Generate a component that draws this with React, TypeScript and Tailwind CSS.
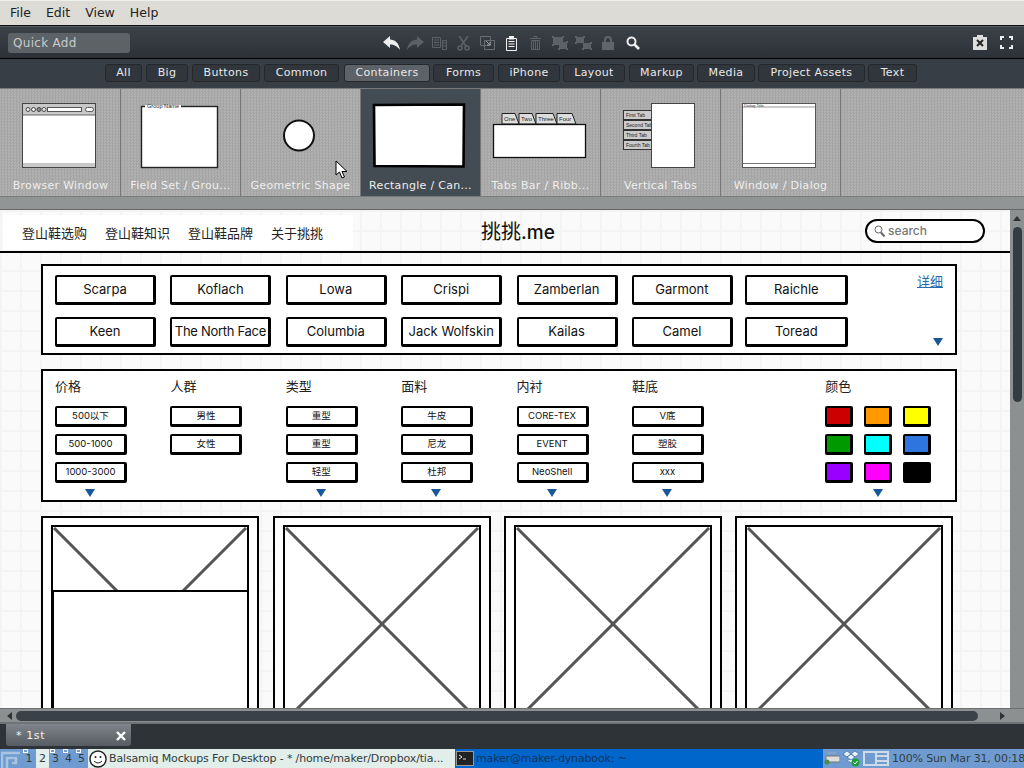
import React from "react";

const tabs = [
  { label: "All", w: "w-[37px]", ml: "ml-[105px]" },
  { label: "Big", w: "w-[42px]", ml: "ml-[4px]" },
  { label: "Buttons", w: "w-[68px]", ml: "ml-[4px]" },
  { label: "Common", w: "w-[75px]", ml: "ml-[4px]" },
  { label: "Containers", w: "w-[86px]", ml: "ml-[5px]", active: true },
  { label: "Forms", w: "w-[61px]", ml: "ml-[3px]" },
  { label: "iPhone", w: "w-[62px]", ml: "ml-[4px]" },
  { label: "Layout", w: "w-[62px]", ml: "ml-[3px]" },
  { label: "Markup", w: "w-[65px]", ml: "ml-[4px]" },
  { label: "Media", w: "w-[58px]", ml: "ml-[3px]" },
  { label: "Project Assets", w: "w-[107px]", ml: "ml-[3px]" },
  { label: "Text", w: "w-[49px]", ml: "ml-[3px]" },
];

const brands = [
  "Scarpa", "Koflach", "Lowa", "Crispi", "Zamberlan", "Garmont", "Raichle",
  "Keen", "The North Face", "Columbia", "Jack Wolfskin", "Kailas", "Camel", "Toread",
];

const filters = [
  { title: "价格", items: ["500以下", "500-1000", "1000-3000"], more: true },
  { title: "人群", items: ["男性", "女性"], more: false },
  { title: "类型", items: ["重型", "重型", "轻型"], more: true },
  { title: "面料", items: ["牛皮", "尼龙", "杜邦"], more: true },
  { title: "内衬", items: ["CORE-TEX", "EVENT", "NeoShell"], more: true },
  { title: "鞋底", items: ["V底", "塑胶", "xxx"], more: true },
];

const swatches = [
  "bg-[#cc0000]", "bg-[#ff9900]", "bg-[#ffff00]",
  "bg-[#009900]", "bg-[#00ffff]", "bg-[#2e75e0]",
  "bg-[#9900ff]", "bg-[#ff00ff]", "bg-[#000000]",
];

function Triangle() {
  return (
    <svg width="10" height="8" viewBox="0 0 10 8" className="block">
      <path d="M0 0H10L5 8Z" fill="#1a5796" />
    </svg>
  );
}

function ToolIcons() {
  return (
    <div className="flex items-center absolute left-[383px] top-[6px] h-[20px]">
      <svg width="17" height="14" viewBox="0 0 17 14" fill="#eeeeee"><path d="M0 6L7 0V3.5C12 3.5 16 7 17 14 14 10 11 8.5 7 8.5V12Z" /></svg>
      <svg width="17" height="14" viewBox="0 0 17 14" fill="#595f64" className="ml-[7px]"><path d="M17 6L10 0V3.5C5 3.5 1 7 0 14 3 10 6 8.5 10 8.5V12Z" /></svg>
      <svg width="15" height="14" viewBox="0 0 15 14" fill="none" stroke="#5b6166" className="ml-[8px]"><path d="M.5 1.5H8.5V11.5H.5ZM2 4H7M2 6.5H7M2 9H7M10.5 4.5H14.5V13.5H10.5ZM10.5 7H14.5M10.5 10H14.5" /></svg>
      <svg width="13" height="15" viewBox="0 0 13 15" fill="none" stroke="#5b6166" strokeWidth="1.6" className="ml-[10px]"><path d="M2 0L9 10M11 0L4 10" /><circle cx="3" cy="12" r="2" /><circle cx="10" cy="12" r="2" /></svg>
      <svg width="15" height="14" viewBox="0 0 15 14" fill="none" stroke="#666c70" className="ml-[10px]"><path d="M.5 .5H10.5V9.5H.5ZM4.5 4.5H14.5V13.5H4.5Z" /><path d="M6 5L10 9M10 6V9H7" stroke="#9a9ea1" /></svg>
      <svg width="11" height="15" viewBox="0 0 11 15" fill="none" stroke="#f2f2f2" className="ml-[11px]"><path d="M.5 2.5H10.5V14.5H.5ZM2.5 5.5H8.5M2.5 8H8.5M2.5 10.5H8.5" /><rect x="3" y="0" width="5" height="3.5" fill="#f2f2f2" stroke="none" /></svg>
      <svg width="11" height="14" viewBox="0 0 11 14" fill="none" stroke="#5b6166" className="ml-[13px]"><path d="M0 2.5H11M4 2.5V.5H7V2.5M1.5 4.5H9.5V13.5H1.5ZM3.5 5V13M5.5 5V13M7.5 5V13" /></svg>
      <svg width="16" height="14" viewBox="0 0 16 14" fill="#5b6166" className="ml-[11px]"><path d="M1 1H11V9H1ZM7 6H15V13H7Z" /><path d="M0 0H2V2H0ZM10 0H12V2H10ZM0 8H2V10H0ZM14 12H16V14H14ZM6 12H8V14H6ZM14 5H16V7H14Z" /></svg>
      <svg width="17" height="14" viewBox="0 0 17 14" fill="#5b6166" className="ml-[7px]"><path d="M1 1H9V7H1ZM8 7H16V13H8Z" /><path d="M0 0H2V2H0ZM8 0H10V2H8ZM0 6H2V8H0ZM15 12H17V14H15ZM7 12H9V14H7ZM15 6H17V8H15Z" /></svg>
      <svg width="12" height="14" viewBox="0 0 12 14" className="ml-[10px]"><path d="M3 6V4A3 3 0 0 1 9 4V6" fill="none" stroke="#5f6569" strokeWidth="2" /><rect x="0" y="6" width="12" height="8" fill="#5f6569" /></svg>
      <svg width="14" height="14" viewBox="0 0 14 14" fill="none" stroke="#eeeeee" className="ml-[12px]"><circle cx="5.5" cy="5.5" r="4" strokeWidth="2" /><path d="M8.5 8.5L13 13" strokeWidth="2.6" /></svg>
    </div>
  );
}

function Thumb({ kind }: { kind: string }) {
  if (kind === "browser") {
    return (
      <svg width="120" height="92" viewBox="0 0 120 92" className="-mt-px">
        <rect x="21.5" y="15.5" width="73" height="64" fill="#fff" stroke="#444" />
        <rect x="22" y="16" width="72" height="11" fill="#c8c8c8" />
        <path d="M22 27H94" stroke="#666" />
        <circle cx="27" cy="21.5" r="2" fill="#eee" stroke="#444" />
        <circle cx="32.5" cy="21.5" r="2" fill="#eee" stroke="#444" />
        <circle cx="38" cy="21.5" r="2" fill="#888" stroke="#444" />
        <circle cx="43" cy="21.5" r="2" fill="#eee" stroke="#444" />
        <rect x="46.5" y="19.5" width="34" height="4" fill="#fff" stroke="#555" />
        <rect x="84.5" y="19.5" width="8" height="4" rx="2" fill="#fff" stroke="#555" />
        <rect x="22" y="75" width="72" height="4" fill="#c8c8c8" />
      </svg>
    );
  }
  if (kind === "fieldset") {
    return (
      <svg width="120" height="92" viewBox="0 0 120 92" className="-mt-px">
        <rect x="20.5" y="18.5" width="76" height="61" fill="#fff" stroke="#222" strokeWidth="1.4" />
        <rect x="24" y="17" width="36" height="3" fill="#ffffff" />
        <text x="26" y="20" fontSize="5.6" fill="#222" fontFamily="Liberation Sans, sans-serif">Group Name</text>
      </svg>
    );
  }
  if (kind === "shape") {
    return (
      <svg width="120" height="92" viewBox="0 0 120 92" className="-mt-px">
        <circle cx="58" cy="47.5" r="15" fill="#fff" stroke="#111" strokeWidth="2" />
      </svg>
    );
  }
  if (kind === "rect") {
    return (
      <svg width="120" height="92" viewBox="0 0 120 92" className="-mt-px">
        <path d="M13 17L103 16.5 102.5 78.5 13.5 78Z" fill="#fff" stroke="#000" strokeWidth="2.6" />
      </svg>
    );
  }
  if (kind === "tabs") {
    return (
      <svg width="120" height="92" viewBox="0 0 120 92" className="-mt-px">
        {[
          ["One", 21, 38],
          ["Two", 38, 55],
          ["Three", 55, 76],
          ["Four", 76, 95],
        ].map(([t, a, b]) => (
          <g key={t as string}>
            <path d={`M${a} 36V25.5H${(b as number) - 4}L${b} 36Z`} fill="#ddd" stroke="#222" />
            <text x={(a as number) + 2} y="33" fontSize="6" fill="#222" fontFamily="Liberation Sans, sans-serif">{t}</text>
          </g>
        ))}
        <rect x="12.5" y="36.5" width="92" height="33" fill="#fff" stroke="#111" strokeWidth="1.3" />
      </svg>
    );
  }
  if (kind === "vtabs") {
    return (
      <svg width="120" height="92" viewBox="0 0 120 92" className="-mt-px">
        {["First Tab", "Second Tab", "Third Tab", "Fourth Tab"].map((t, i) => (
          <g key={t}>
            <rect x="22.5" y={22.5 + i * 10} width="28" height="9" fill="#ccc" stroke="#333" />
            <text x="25" y={29 + i * 10} fontSize="5" fill="#222" fontFamily="Liberation Sans, sans-serif">{t}</text>
          </g>
        ))}
        <rect x="50.5" y="15.5" width="43" height="64" fill="#fff" stroke="#444" />
      </svg>
    );
  }
  return (
    <svg width="120" height="92" viewBox="0 0 120 92" className="-mt-px">
      <rect x="21.5" y="15.5" width="73" height="64" fill="#fff" stroke="#555" />
      <path d="M22 19H94" stroke="#999" strokeWidth="1" />
      <text x="23" y="19" fontSize="4" fill="#444" fontFamily="Liberation Sans, sans-serif">Dialog Title</text>
      <path d="M22 75.5H94" stroke="#777" />
    </svg>
  );
}

const library = [
  { kind: "browser", label: "Browser Window" },
  { kind: "fieldset", label: "Field Set / Grou..." },
  { kind: "shape", label: "Geometric Shape" },
  { kind: "rect", label: "Rectangle / Can...", active: true },
  { kind: "tabs", label: "Tabs Bar / Ribb..." },
  { kind: "vtabs", label: "Vertical Tabs" },
  { kind: "window", label: "Window / Dialog" },
];

function PlaceholderCard({ overlay }: { overlay?: boolean }) {
  return (
    <div className={`w-[218px] h-[300px] shrink-0 border-2 border-black bg-white pl-[8px] pt-[7px] ${overlay ? "mr-px" : ""}`}>
      <div className="relative w-[198px] h-[198px] border-2 border-black bg-white">
        <svg width="194" height="194" viewBox="0 0 194 194" className="block">
          <path d="M1 1L193 193M193 1L1 193" stroke="#555555" strokeWidth="3" />
        </svg>
        {overlay && (
          <div className="absolute left-[-1px] top-[63px] w-[197px] h-[200px] border-2 border-black bg-white" />
        )}
      </div>
    </div>
  );
}

function Workspace({ n, current }: { n: number; current?: boolean }) {
  return (
    <div className={`relative w-[13px] shrink-0 text-center ${current ? "bg-[#e1eeea]" : "bg-[#6f9bd1]"}`}>
      {!current && <div className="absolute left-[1px] top-0 w-[5px] h-[4px] border border-white" />}
      {n}
    </div>
  );
}

export default function App() {
  return (
    <div className="relative w-[1024px] h-[768px] overflow-hidden flex flex-col font-['DejaVu_Sans',sans-serif] bg-[#2e3338]">
      {/* menu */}
      <div className="h-[26px] shrink-0 bg-[#dcdbd6] border-b border-[#111] border-t border-t-[#eeeeea] flex items-center pl-[10px] gap-[15px] text-[12.5px] text-[#222]">
        <span>File</span>
        <span>Edit</span>
        <span>View</span>
        <span>Help</span>
      </div>

      {/* toolbar */}
      <div className="relative h-[33px] shrink-0 bg-gradient-to-b from-[#3b4248] to-[#2c3136] border-b border-black border-t border-t-[#555a5f]">
        <div className="absolute left-[8px] top-[6px] w-[122px] h-[20px] rounded-[3px] bg-[#5d6266] text-[#c9cbcc] text-[12px] tracking-[0.3px] pl-[5px] leading-[20px]">
          Quick Add
        </div>
        <ToolIcons />
        <div className="absolute left-[973px] top-[8px] flex items-center">
          <svg width="14" height="15" viewBox="0 0 14 15">
            <path d="M0 2H4V0H10V2H14V15H0Z" fill="#dddddd" />
            <path d="M4 5L10 11M10 5L4 11" stroke="#222" strokeWidth="2" />
          </svg>
          <svg width="13" height="13" viewBox="0 0 13 13" fill="none" stroke="#eeeeee" strokeWidth="2" className="ml-[13px]">
            <path d="M4 1H1V4M9 1H12V4M4 12H1V9M9 12H12V9" />
          </svg>
        </div>
      </div>

      {/* category tabs */}
      <div className="h-[29px] shrink-0 bg-[#373e45] flex items-center pb-px text-[11px] tracking-[0.35px] text-[#e8e8e8]">
        {tabs.map((t) => (
          <div
            key={t.label}
            className={`${t.w} ${t.ml} h-[18px] flex items-center justify-center rounded-[3px] border border-[#24282c] ${t.active ? "bg-[#5c6268]" : "bg-[#30363c]"}`}
          >
            {t.label}
          </div>
        ))}
      </div>

      {/* component library */}
      <div className="h-[109px] shrink-0 flex pl-px border-y border-[#7a7a7a] bg-[repeating-conic-gradient(#a5a5a5_0_25%,#b1b1b1_0_50%)] bg-[length:3px_3px]">
        {library.map((item) => (
          <div
            key={item.label}
            className={`w-[120px] h-full shrink-0 flex flex-col items-center border-r border-[#777] ${item.active ? "bg-[#434b53]" : ""}`}
          >
            <Thumb kind={item.kind} />
            <div className="text-[11px] tracking-[0.3px] text-[#eeeeee] whitespace-nowrap leading-[14px] mt-[-1px]">
              {item.label}
            </div>
          </div>
        ))}
      </div>
      <div className="h-[13px] shrink-0 bg-[#929596] border-b border-[#666]" />

      {/* canvas */}
      <div className="h-[498px] shrink-0 flex">
        <div className="w-[1010px] h-full overflow-hidden bg-[#fafafa] bg-[linear-gradient(#f4f4f4_2px,transparent_2px),linear-gradient(90deg,#f4f4f4_2px,transparent_2px)] bg-[length:20px_20px] text-[#111]">
          <div className="h-[43px] border-b-2 border-black flex font-['Noto_Sans_CJK_SC',sans-serif]">
            <div className="ml-[3px] mt-[5px] w-[350px] h-[35px] bg-white pl-[19px] flex items-center gap-[18px] text-[13px] text-[#222]">
              <span>登山鞋选购</span>
              <span>登山鞋知识</span>
              <span>登山鞋品牌</span>
              <span>关于挑挑</span>
            </div>
            <div className="ml-[128px] mt-[6px] text-[20px] leading-[30px] text-[#111]">
              挑挑<span className="font-['Inter',sans-serif] text-[19px] font-medium">.me</span>
            </div>
            <div className="ml-auto mr-[25px] mt-[9px] w-[120px] h-[24px] rounded-full border-2 border-black bg-white flex items-center pl-[7px] gap-[3px] text-[12px] font-medium text-[#777] font-['Inter',sans-serif]">
              <svg width="11" height="12" viewBox="0 0 11 12" fill="none" stroke="#666">
                <circle cx="4.5" cy="4.5" r="3.5" />
                <path d="M7 7.5L10.5 11.5" strokeWidth="2" />
              </svg>
              search
            </div>
          </div>

          <div className="ml-[41px] mt-[11px] w-[916px] h-[91px] border-2 border-black bg-white flex pl-[12px] pt-[9px] font-['Inter',sans-serif]">
            <div className="grid grid-cols-[repeat(7,101px)] gap-x-[14.4px] gap-y-[12px] content-start">
              {brands.map((b, i) => (
                <div
                  key={b}
                  className={`h-[30px] flex items-center justify-center whitespace-nowrap text-[13px] bg-white border-t-2 border-l-2 border-r-[3px] border-b-[3px] border-black rounded-[2px] ${i % 7 === 6 ? "-ml-[2px]" : ""} ${b === "The North Face" ? "tracking-[-0.3px]" : ""}`}
                >
                  {b}
                </div>
              ))}
            </div>
            <div className="ml-auto mr-[12px] flex flex-col items-end justify-between pb-[7px]">
              <span className="text-[13px] mt-[-3px] leading-[18px] text-[#2a6cab] underline font-['Noto_Sans_CJK_SC',sans-serif]">详细</span>
              <Triangle />
            </div>
          </div>

          <div className="ml-[41px] mt-[14px] w-[916px] h-[133px] border-2 border-black bg-white flex pl-[12px] font-['Noto_Sans_CJK_SC',sans-serif]">
            {filters.map((f) => (
              <div key={f.title} className="w-[115.4px] shrink-0 flex flex-col">
                <div className="text-[13px] leading-[18px] mt-[6px] mb-[11px] text-[#222]">{f.title}</div>
                <div className="w-[72px] flex flex-col gap-[7px]">
                  {f.items.map((item, i) => (
                    <div
                      key={i}
                      className="h-[21px] flex items-center justify-center whitespace-nowrap text-[9.5px] bg-white border-t-2 border-l-2 border-r-[3px] border-b-[3px] border-black rounded-[2px] font-['Inter','Noto_Sans_CJK_SC',sans-serif]"
                    >
                      {item}
                    </div>
                  ))}
                </div>
                {f.more && (
                  <div className="w-[70px] flex justify-center mt-[6px]">
                    <Triangle />
                  </div>
                )}
              </div>
            ))}
            <div className="ml-[78px] flex flex-col">
              <div className="text-[13px] leading-[18px] mt-[6px] mb-[11px] text-[#222]">颜色</div>
              <div className="grid grid-cols-[repeat(3,28px)] gap-x-[11px] gap-y-[7px]">
                {swatches.map((c) => (
                  <div key={c} className={`${c} h-[21px] border-t-2 border-l-2 border-r-[3px] border-b-[3px] border-black rounded-[2px]`} />
                ))}
              </div>
              <div className="flex justify-center mt-[6px]">
                <Triangle />
              </div>
            </div>
          </div>

          <div className="ml-[41px] mt-[14px] flex gap-[13px]">
            <PlaceholderCard overlay />
            <PlaceholderCard />
            <PlaceholderCard />
            <PlaceholderCard />
          </div>
        </div>

        {/* vertical scrollbar */}
        <div className="w-[14px] h-full bg-[#8d9091] flex flex-col items-center">
          <svg width="8" height="5" viewBox="0 0 8 5" className="mt-[6px]"><path d="M0 5L4 0 8 5Z" fill="#2e3338" /></svg>
          <div className="w-[9px] h-[175px] mt-[6px] rounded-[5px] bg-[#343b42]" />
        </div>
      </div>

      {/* horizontal scrollbar */}
      <div className="h-[14px] shrink-0 bg-[#8d9091] border-t border-[#6d6f70] flex items-center">
        <svg width="5" height="8" viewBox="0 0 5 8" className="ml-[7px]"><path d="M5 0L0 4 5 8Z" fill="#2e3338" /></svg>
        <div className="ml-[4px] w-[962px] h-[10px] rounded-[5px] bg-[#3a4148]" />
        <svg width="5" height="8" viewBox="0 0 5 8" className="ml-[22px]"><path d="M0 0L5 4 0 8Z" fill="#2e3338" /></svg>
      </div>

      {/* document tabs */}
      <div className="h-[27px] shrink-0 bg-[#2e3338] border-t-2 border-[#6e7375]">
        <div className="ml-[6px] w-[125px] h-[22px] rounded-b-[3px] bg-gradient-to-b from-[#7f858a] to-[#565c61] flex items-center pl-[10px] pr-[4px] pt-[2px] text-[11px] text-[#f0f0f0] tracking-[0.6px]">
          <span>* 1st</span>
          <svg width="10" height="10" viewBox="0 0 10 10" className="ml-auto mr-[1px]"><path d="M1 1L9 9M9 1L1 9" stroke="#fff" strokeWidth="2.4" /></svg>
        </div>
      </div>

      {/* desktop panel */}
      <div className="h-[19px] shrink-0 flex text-[11px] tracking-[-0.15px] leading-[19px] text-[#333b3d]">
        <div className="w-[22px] shrink-0 bg-[#6f9bd1] flex items-center justify-center">
          <svg width="20" height="18" viewBox="0 0 20 18" fill="none" stroke="#a9c4e3" strokeWidth="2.5">
            <path d="M1 18V3H19M6 18V8H15V13H11" />
          </svg>
        </div>
        <div className="relative w-[14px] shrink-0 bg-[#6f9bd1] text-center">
          <div className="absolute left-[1px] top-0 w-[5px] h-[4px] border border-white" />
          1
        </div>
        <Workspace n={2} current />
        <Workspace n={3} />
        <Workspace n={4} />
        <Workspace n={5} />
        <div className="w-[367px] shrink-0 bg-[#e1eeea] flex items-center pl-[1px] whitespace-nowrap overflow-hidden">
          <svg width="18" height="18" viewBox="0 0 18 18" className="shrink-0 mr-[2px]">
            <circle cx="9" cy="9" r="8" fill="#fff" stroke="#222" strokeWidth="1.4" />
            <circle cx="6.5" cy="7" r="1" fill="#222" />
            <circle cx="11.5" cy="7" r="1" fill="#222" />
            <path d="M5 11Q9 15 13 11" fill="none" stroke="#222" />
          </svg>
          Balsamiq Mockups For Desktop - * /home/maker/Dropbox/tia...
        </div>
        <div className="w-[368px] shrink-0 bg-[#0066cc] flex items-center pl-[1px] whitespace-nowrap text-[#10345c]">
          <svg width="18" height="15" viewBox="0 0 18 15" className="shrink-0 mr-[2px]">
            <rect x="0.5" y="0.5" width="17" height="14" fill="#222" stroke="#999" />
            <path d="M3 4L6 6 3 8M7 8H10" stroke="#ddd" fill="none" />
          </svg>
          maker@maker-dynabook: ~
        </div>
        <div className="flex-1 bg-[#6f9bd1] flex items-center pl-[1px] whitespace-nowrap">
          <svg width="16" height="13" viewBox="0 0 16 13" className="shrink-0">
            <rect x="2" y="4" width="14" height="6" fill="#ddd" stroke="#777" />
            <circle cx="3" cy="10" r="2.5" fill="#4c8c4a" />
            <path d="M4 1H12" stroke="#9ab" />
          </svg>
          <svg width="17" height="17" viewBox="0 0 17 17" className="shrink-0 ml-[3px]">
            <path d="M4 1L8 4 4 7 0 4ZM12 1L16 4 12 7 8 4ZM4 7L8 10 12 7 8 4ZM4 10L8 13 12 10" fill="#e8f0f8" stroke="#3a6ea5" strokeWidth="0.7" />
            <circle cx="12.5" cy="12.5" r="4" fill="#1f9d3a" />
            <path d="M10.5 12.5L12 14 14.5 11" stroke="#fff" fill="none" />
          </svg>
          <div className="ml-[3px] w-[26px] h-[15px] border-2 border-[#cfdbe6] flex shrink-0">
            <div className="w-[10px] bg-[#6f9bd1]" />
            <div className="flex-1 border-l-2 border-[#cfdbe6] flex flex-col justify-evenly">
              <div className="h-[2px] bg-[#cfdbe6]" />
              <div className="h-[2px] bg-[#cfdbe6]" />
            </div>
          </div>
          <span className="ml-[3px]">100% Sun Mar 31, 00:18</span>
        </div>
      </div>

      {/* mouse pointer */}
      <svg width="14" height="20" viewBox="0 0 14 20" className="absolute left-[335px] top-[160px]">
        <path d="M1 1V15L4.5 12 7 18 9.5 17 7 11.5H12Z" fill="#fff" stroke="#000" />
      </svg>
    </div>
  );
}
